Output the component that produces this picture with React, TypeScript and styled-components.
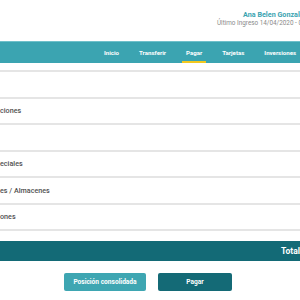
import React from 'react'
import styled, { createGlobalStyle } from "styled-components";

const GlobalStyle = createGlobalStyle`
    html, body {
        margin: 0;
        padding: 0;
        overflow: hidden;
        background: #ffffff;
        font-family: Roboto, "Liberation Sans", sans-serif;
    }
`;

const Page = styled.div`
    width: 300px;
    height: 300px;
    overflow: hidden;
    display: flex;
    flex-direction: column;
`;

const UserInfo = styled.div`
    height: 41px;
    box-sizing: border-box;
    padding-top: 10px;
    display: flex;
    flex-direction: column;
    white-space: nowrap;
`;

const UserName = styled.div`
    margin-left: 243px;
    font-size: 7.2px;
    font-weight: 700;
    color: #3aa3b1;
    line-height: 9px;
`;

const LastLogin = styled.div`
    margin-left: 217px;
    font-size: 6.35px;
    color: #8a8a8a;
    line-height: 9px;
`;

const NavBar = styled.nav`
    height: 21px;
    background: #3ba4b1;
    border-top: 1px solid #6fc0ca;
    display: flex;
    align-items: stretch;
    padding-left: 104px;
    gap: 20px;
    white-space: nowrap;
`;

const NavItem = styled.div<{ $active?: boolean }>`
    position: relative;
    display: flex;
    align-items: center;
    font-size: 6.1px;
    font-weight: 700;
    color: #ffffff;

    &::after {
        content: '';
        display: ${p => (p.$active ? 'block' : 'none')};
        position: absolute;
        left: -4px;
        right: -4px;
        bottom: 0;
        height: 2px;
        background: #f2c81f;
    }
`;

const List = styled.div`
    margin-top: 7px;
    display: flex;
    flex-direction: column;
`;

const Row = styled.div`
    height: 24.5px;
    border-top: 2px solid #e5e5e5;
    display: flex;
    align-items: center;
    font-size: 7.2px;
    font-weight: 500;
    color: #505050;
    white-space: nowrap;

    &:last-child {
        border-bottom: 2px solid #e5e5e5;
    }
`;

const TotalBar = styled.div`
    margin-top: 10px;
    height: 20px;
    background: #136a76;
    display: flex;
    align-items: center;
    padding-left: 281px;
    font-size: 8.5px;
    font-weight: 700;
    color: #ffffff;
    white-space: nowrap;
`;

const Actions = styled.div`
    margin-top: 12px;
    display: flex;
    gap: 12px;
    padding-left: 64px;
`;

const Button = styled.button<{ $dark?: boolean }>`
    height: 18px;
    width: ${p => (p.$dark ? '74px' : '82px')};
    border: none;
    border-radius: 2px;
    background: ${p => (p.$dark ? '#146a76' : '#3ea6b2')};
    color: #ffffff;
    font-family: Roboto, "Liberation Sans", sans-serif;
    font-size: 6.6px;
    font-weight: 700;
    padding: 0;
`;

const menu = ['Inicio', 'Transferir', 'Pagar', 'Tarjetas', 'Inversiones', 'Servicios']
const rows = ['', 'ciones', '', 'eciales', 'es / Almacenes', 'ones']

const App = () => {
    return (
        <Page>
            <GlobalStyle/>
            <UserInfo>
                <UserName>Ana Belen Gonzalez</UserName>
                <LastLogin>Último Ingreso 14/04/2020 - 09:30</LastLogin>
            </UserInfo>
            <NavBar>
                {menu.map(m => (
                    <NavItem key={m} $active={m === 'Pagar'}>{m}</NavItem>
                ))}
            </NavBar>
            <List>
                {rows.map((r, i) => (
                    <Row key={i}>{r}</Row>
                ))}
            </List>
            <TotalBar>Total a pagar</TotalBar>
            <Actions>
                <Button>Posición consolidada</Button>
                <Button $dark>Pagar</Button>
            </Actions>
        </Page>
    )
}

export default App
